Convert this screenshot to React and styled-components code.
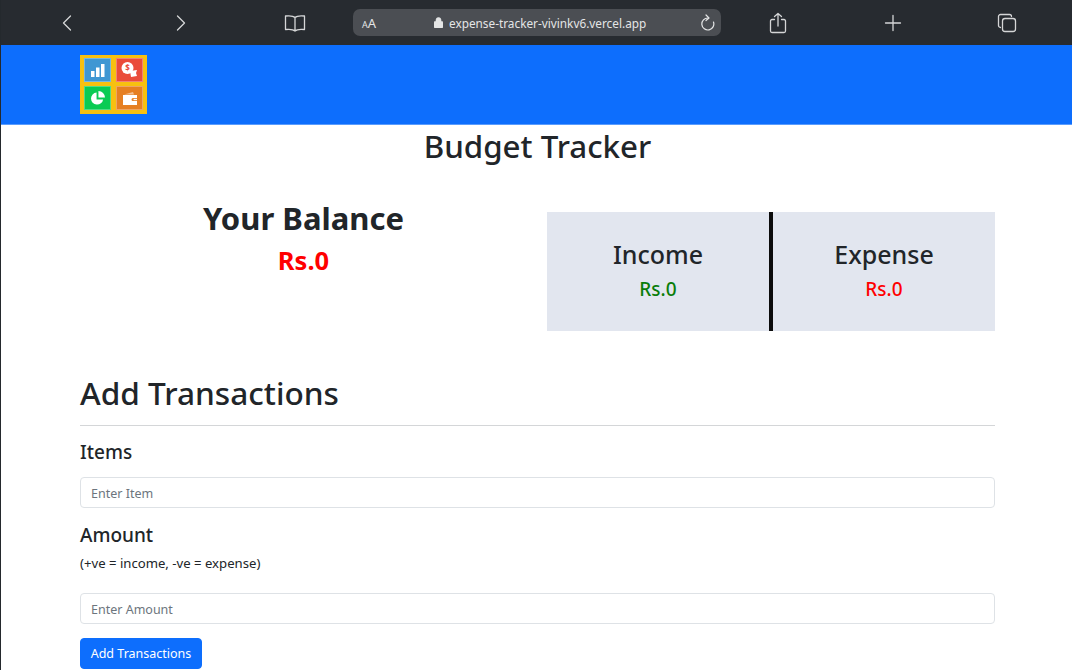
import React from 'react'
import styled, { createGlobalStyle } from 'styled-components'

const GlobalStyle = createGlobalStyle`
  html, body {
    margin: 0;
    padding: 0;
    background: #fff;
    height: 100%;
    overflow: hidden;
  }
  * {
    box-sizing: border-box;
  }
  body {
    font-family: 'Noto Sans', 'Open Sans', sans-serif;
    color: #212529;
  }
`

const Page = styled.div`
  width: 1072px;
  height: 670px;
  overflow: hidden;
  border-left: 1px solid #24292d;
`

const BrowserBar = styled.header`
  height: 45px;
  margin-left: -1px;
  background: #272b30;
  display: flex;
  align-items: center;
`

const BarButton = styled.div`
  width: 24px;
  height: 24px;
  flex: none;
  margin-left: ${(p) => p.$gap}px;
  display: flex;
  align-items: center;
  justify-content: center;
  svg {
    display: block;
    fill: none;
    stroke: #d5d6d7;
    stroke-width: 1.3;
    stroke-linecap: round;
    stroke-linejoin: round;
  }
`

const AddressBar = styled.div`
  width: 368px;
  height: 27px;
  margin-left: 46px;
  flex: none;
  background: #4b4e53;
  border-radius: 7px;
  display: flex;
  align-items: center;
  padding: 0 6px 0 9px;
  color: #e4e5e6;
`

const TextSize = styled.span`
  font-size: 13px;
  width: 72px;
  flex: none;
  small {
    font-size: 9px;
  }
`

const Url = styled.span`
  font-size: 11.8px;
  flex: 1;
  white-space: nowrap;
  margin-left: 6px;
`

const Navbar = styled.nav`
  height: 80px;
  background: #0d6efd;
  border-bottom: 1px solid #5a9cfd;
  padding: 10px 0 0 79px;
`

const Logo = styled.div`
  width: 67px;
  height: 59px;
  background: #f7c010;
  padding: 3px 4px 4px;
  display: grid;
  grid-template-columns: 1fr 1fr;
  grid-template-rows: 1fr 1fr;
  gap: 4px 5px;
`

const LogoTile = styled.div`
  background: ${(p) => p.$bg};
  border: 1px solid rgba(255, 255, 255, 0.3);
  display: flex;
  align-items: center;
  justify-content: center;
  svg {
    display: block;
    fill: #fff;
  }
`

const Content = styled.main`
  padding: 0 77px 0 79px;
`

const Title = styled.h1`
  margin: 0;
  height: 46px;
  font-size: 31.300px;
  font-weight: 500;
  line-height: 42px;
  text-align: center;
`

const Summary = styled.section`
  display: flex;
  margin-top: 41px;
  height: 119px;
`

const Balance = styled.div`
  width: 447px;
  margin-right: 20px;
  text-align: center;
  h2 {
    margin: -16px 0 0;
    font-size: 31px;
    line-height: 44px;
    font-weight: 700;
  }
  p {
    margin: 2px 0 0;
    font-size: 25.500px;
    line-height: 36px;
    font-weight: 700;
    color: #ff0000;
  }
`

const Totals = styled.div`
  width: 448px;
  background: #e2e6ef;
  display: flex;
`

const TotalCell = styled.div`
  flex: 1;
  text-align: center;
  padding-top: 23px;
  & + & {
    border-left: 4px solid #0c0c0c;
  }
  h3 {
    margin: 0;
    font-size: 25px;
    line-height: 38px;
    font-weight: 500;
  }
  p {
    margin: 2px 0 0;
    font-size: 19px;
    line-height: 28px;
    font-weight: 500;
    color: ${(p) => p.$color};
  }
`

const SectionTitle = styled.h2`
  margin: 39px 0 0;
  height: 56px;
  font-size: 31.600px;
  line-height: 46px;
  font-weight: 500;
  border-bottom: 1px solid #d4d6d8;
`

const FieldLabel = styled.h4`
  margin: ${(p) => p.$top}px 0 0;
  font-size: 19px;
  line-height: 28px;
  font-weight: 500;
`

const Hint = styled.small`
  display: block;
  margin-top: 5px;
  font-size: 13.150px;
  line-height: 18px;
`

const Input = styled.input`
  display: block;
  width: 100%;
  height: 31px;
  margin-top: ${(p) => p.$top}px;
  padding: 2px 10px 0;
  border: 1px solid #dee2e6;
  border-radius: 4px;
  background: #fff;
  font: 400 12.500px 'Noto Sans', sans-serif;
  &::placeholder {
    color: #6c757d;
    opacity: 1;
  }
`

const SubmitButton = styled.button`
  display: block;
  margin-top: 14px;
  width: 122px;
  height: 31px;
  padding: 0;
  border: 1px solid #0d6efd;
  border-radius: 4px;
  background: #0d6efd;
  color: #fff;
  font: 400 12.500px 'Noto Sans', sans-serif;
`

const App = () => {
  return (
    <Page>
      <GlobalStyle />
      <BrowserBar>
        <BarButton $gap={55}>
          <svg width="12" height="16" viewBox="0 0 12 16">
            <path d="M9.500 1 2.500 8l7 7" />
          </svg>
        </BarButton>
        <BarButton $gap={90}>
          <svg width="12" height="16" viewBox="0 0 12 16">
            <path d="M2.500 1l7 7-7 7" />
          </svg>
        </BarButton>
        <BarButton $gap={90}>
          <svg width="22" height="18" viewBox="0 0 22 18">
            <path d="M11 3.500C9.500 2 6 1.500 1.500 2v13.500c4.500-.5 8 0 9.500 1.500 1.500-1.500 5-2 9.500-1.500V2C16 1.500 12.500 2 11 3.500zM11 3.500V17" />
          </svg>
        </BarButton>
        <AddressBar>
          <TextSize>
            <small>A</small>A
          </TextSize>
          <svg width="9" height="11" viewBox="0 0 9 11">
            <path
              d="M2 4.500V3a2.500 2.500 0 0 1 5 0v1.500M1 4.500h7a1 1 0 0 1 1 1V10a1 1 0 0 1-1 1H1a1 1 0 0 1-1-1V5.500a1 1 0 0 1 1-1z"
              fill="#e4e5e6"
              stroke="#e4e5e6"
              strokeWidth="0.6"
            />
          </svg>
          <Url>expense-tracker-vivinkv6.vercel.app</Url>
          <svg width="16" height="18" viewBox="0 0 16 18" fill="none" stroke="#e4e5e6" strokeWidth="1.2" strokeLinecap="round" strokeLinejoin="round">
            <path d="M9 4a6 6 0 1 0 5.500 4" />
            <path d="M7 1l3 3-3 2.500" />
          </svg>
        </AddressBar>
        <BarButton $gap={45}>
          <svg width="18" height="22" viewBox="0 0 18 22">
            <path d="M5.500 7.500H3a1.500 1.500 0 0 0-1.500 1.500v10A1.500 1.500 0 0 0 3 20.500h12a1.500 1.500 0 0 0 1.500-1.500V9A1.500 1.500 0 0 0 15 7.500h-2.500M9 14V1.500M5.500 4.500 9 1.500l3.500 3" />
          </svg>
        </BarButton>
        <BarButton $gap={91}>
          <svg width="18" height="18" viewBox="0 0 18 18">
            <path d="M9 1.500v15M1.500 9h15" />
          </svg>
        </BarButton>
        <BarButton $gap={90}>
          <svg width="20" height="20" viewBox="0 0 20 20">
            <path d="M3.500 14.500A2 2 0 0 1 1.500 12.500V3.500a2 2 0 0 1 2-2h9a2 2 0 0 1 2 2" />
            <rect x="5.500" y="5.500" width="13" height="13" rx="2.500" />
          </svg>
        </BarButton>
      </BrowserBar>
      <Navbar>
        <Logo>
          <LogoTile $bg="#3f97d3">
            <svg width="16" height="14" viewBox="0 0 16 14">
              <rect x="1" y="8" width="3.500" height="6" />
              <rect x="6" y="4.500" width="3.500" height="9.500" />
              <rect x="11" y="1" width="3.500" height="13" />
            </svg>
          </LogoTile>
          <LogoTile $bg="#ea4c3a">
            <svg width="17" height="16" viewBox="0 0 17 16">
              <circle cx="6.500" cy="6" r="6" />
              <path d="M9 9l7-1-1 3 1 3-6 1z" />
              <text x="6.500" y="9" textAnchor="middle" fontSize="8" fontWeight="700" fill="#ea4c3a">$</text>
            </svg>
          </LogoTile>
          <LogoTile $bg="#0acb53">
            <svg width="15" height="15" viewBox="0 0 16 16">
              <path d="M7 1.500a6.500 6.500 0 1 0 7 7.500H7z" />
              <path d="M9 0a7 7 0 0 1 7 7H9z" />
            </svg>
          </LogoTile>
          <LogoTile $bg="#e67f22">
            <svg width="16" height="15" viewBox="0 0 16 15">
              <path d="M2 3.500 11 1l1 2.500z" opacity="0.5" />
              <path d="M1 4h14v3h-4a1.500 1.500 0 0 0 0 3h4v4H1z" />
              <rect x="11.500" y="7.800" width="3.500" height="1.400" />
            </svg>
          </LogoTile>
        </Logo>
      </Navbar>
      <Content>
        <Title>Budget Tracker</Title>
        <Summary>
          <Balance>
            <h2>Your Balance</h2>
            <p>Rs.0</p>
          </Balance>
          <Totals>
            <TotalCell $color="#0a7d0a">
              <h3>Income</h3>
              <p>Rs.0</p>
            </TotalCell>
            <TotalCell $color="#ff0000">
              <h3>Expense</h3>
              <p>Rs.0</p>
            </TotalCell>
          </Totals>
        </Summary>
        <SectionTitle>Add Transactions</SectionTitle>
        <FieldLabel $top={12}>Items</FieldLabel>
        <Input $top={11} placeholder="Enter Item" />
        <FieldLabel $top={13}>Amount</FieldLabel>
        <Hint>(+ve = income, -ve = expense)</Hint>
        <Input $top={21} placeholder="Enter Amount" />
        <SubmitButton>Add Transactions</SubmitButton>
      </Content>
    </Page>
  )
}

export default App
